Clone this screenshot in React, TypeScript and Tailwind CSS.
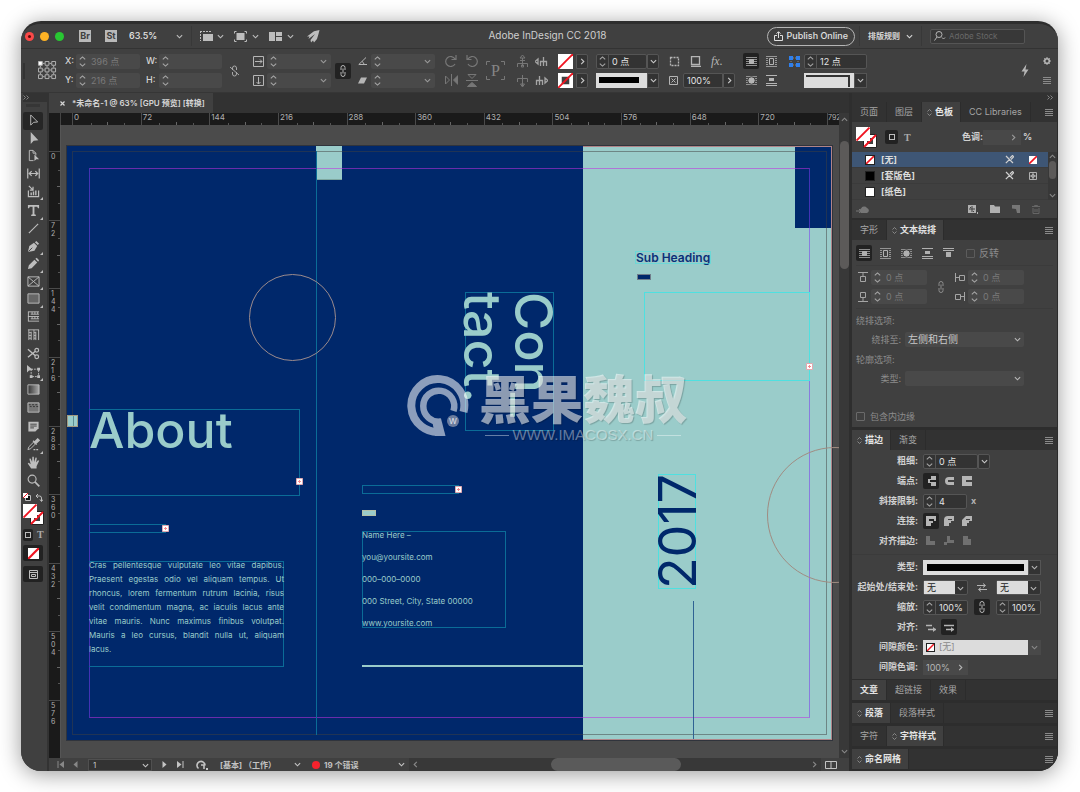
import { useState, type ReactNode } from "react";

function Svg({ w = 14, h = 14, box, children, className = "" }: { w?: number; h?: number; box?: string; children: ReactNode; className?: string }) {
  return (
    <svg
      width={w}
      height={h}
      viewBox={box ?? `0 0 ${w} ${h}`}
      fill="none"
      stroke="currentColor"
      aria-hidden="true"
      className={`block shrink-0 ${className}`}
    >
      {children}
    </svg>
  );
}

function Chevron({ dir = "down", className = "" }: { dir?: "down" | "up" | "left" | "right"; className?: string }) {
  const d = {
    down: "M1 2.5 4 5.5 7 2.5",
    up: "M1 5.5 4 2.5 7 5.5",
    left: "M5.5 1 2.5 4 5.5 7",
    right: "M2.5 1 5.5 4 2.5 7",
  }[dir];
  return (
    <Svg w={7} h={7} box="0 0 8 8" className={className}>
      <path d={d} strokeWidth="1.3" />
    </Svg>
  );
}

function Spin() {
  return (
    <Svg w={7} h={11} className="text-[#a8a8a8]">
      <path d="M.8 3.3 3.5.9l2.7 2.4M.8 7.7l2.7 2.4 2.7-2.4" strokeWidth="1.1" />
    </Svg>
  );
}

function Menu() {
  return (
    <button aria-label="面板菜单" className="text-[#8a8a8a]">
      <Svg w={8} h={7}>
        <path d="M0 .5h8M0 2.5h8M0 4.5h8M0 6.5h8" />
      </Svg>
    </button>
  );
}

// white square crossed by the red "none" stroke
function NoneSwatch({ size = 14, ring = false }: { size?: number; ring?: boolean }) {
  return (
    <Svg w={size} h={size} box="0 0 12 12">
      <path d="M0 0h12v12H0z" fill="#fff" stroke="none" />
      {ring && <path d="M3 3h6v6H3z" fill="#404040" stroke="none" />}
      <path d="M0 12 12 0" stroke="#f01420" strokeWidth={size < 12 ? 2.4 : 1.5} />
    </Svg>
  );
}

function FillStroke() {
  return (
    <Svg w={21} h={21}>
      <path d="M7.5 7.5h13v13h-13z" fill="#fff" stroke="#222" />
      <path d="M11 11h6v6h-6z" fill="#404040" stroke="none" />
      <path d="M8 20 20 8" stroke="#f01420" strokeWidth="2" />
      <path d="M0 0h14v14H0z" fill="#fff" stroke="none" />
      <path d="M.5 13.5 13.5.5" stroke="#f01420" strokeWidth="1.8" />
    </Svg>
  );
}

/* ---------- form parts ---------- */

function StepField({ label, value = "", width, dim = false }: { label: string; value?: string; width: string; dim?: boolean }) {
  return (
    <span
      className={`flex h-[15px] items-center rounded-xs ${dim ? "bg-[#494949]" : "border border-[#555] bg-[#333]"} ${width}`}
    >
      <span className={`flex h-full w-3 shrink-0 items-center justify-center ${dim ? "" : "border-r border-[#555]"}`}>
        <Spin />
      </span>
      <input
        aria-label={label}
        defaultValue={value}
        className={`h-full w-full min-w-0 bg-transparent pl-[3px] outline-none ${dim ? "text-[#7a7a7a]" : "text-[#e4e4e4]"}`}
      />
    </span>
  );
}

function Select({ label, options, width, tone = "dim" }: { label: string; options: string[]; width: string; tone?: "dim" | "light" }) {
  return (
    <span className={`relative flex h-[15px] rounded-xs ${tone === "light" ? "border border-[#555] bg-[#333]" : "bg-[#494949]"} ${width}`}>
      <select
        aria-label={label}
        className={`h-full appearance-none outline-none ${
          tone === "light" ? "mr-3 w-full bg-[#dcdcdc] pl-[3px] text-[#222]" : "w-full bg-transparent pl-[3px] text-[#c8c8c8]"
        }`}
      >
        {options.map((o) => (
          <option key={o}>{o}</option>
        ))}
      </select>
      <Chevron className="pointer-events-none absolute top-1 right-[3px] text-[#b8b8b8]" />
    </span>
  );
}

function StepSelect({ label }: { label: string }) {
  return (
    <span className="flex h-[15px] w-16 items-center justify-between rounded-xs bg-[#494949] pr-1">
      <span className="flex w-3 justify-center">
        <Spin />
      </span>
      <input aria-label={label} className="h-full min-w-0 flex-1 bg-transparent outline-none" />
      <Chevron className="text-[#9a9a9a]" />
    </span>
  );
}

function Drop({ label, dir = "down" }: { label: string; dir?: "down" | "right" }) {
  return (
    <button aria-label={label} className="flex h-[15px] w-3 items-center justify-center rounded-r-xs border border-[#555] bg-[#333] text-[#c8c8c8]">
      <Chevron dir={dir} />
    </button>
  );
}

function IconButton({ label, active = false, size = "size-4", className = "", children }: { label: string; active?: boolean; size?: string; className?: string; children: ReactNode }) {
  return (
    <button
      aria-label={label}
      className={`flex shrink-0 items-center justify-center rounded-xs ${size} ${active ? "bg-[#222]" : ""} ${className}`}
    >
      {children}
    </button>
  );
}

const Sep = () => <span className="h-9 w-px shrink-0 bg-[#383838]" />;

/* ---------- icons ---------- */

const ChainIcon = () => (
  <Svg w={6} h={12}>
    <path d="M1 5V2.5a2 2 0 0 1 4 0V5M1 7v2.5a2 2 0 0 0 4 0V7M3 3.5v5" />
  </Svg>
);

const WRAP_LINES = "M0 1.5h11M0 3.5h11M0 5.5h11M0 7.5h11M0 9.5h11";

const WrapNone = () => (
  <Svg w={11} h={11}>
    <path d={WRAP_LINES} opacity=".75" />
    <path d="M3.5 3.5h4v4h-4z" fill="currentColor" />
  </Svg>
);
const WrapBox = () => (
  <Svg w={11} h={11}>
    <path d="M0 .5h11M0 10.5h11M0 2.5h2M0 4.5h2M0 6.5h2M0 8.5h2M9 2.5h2M9 4.5h2M9 6.5h2M9 8.5h2" opacity=".75" />
    <path d="M3.5 2.5h4v6h-4z" />
  </Svg>
);
const WrapShape = () => (
  <Svg w={11} h={11}>
    <path d={WRAP_LINES} opacity=".7" />
    <circle cx="5.5" cy="5.5" r="3.7" fill="currentColor" stroke="#404040" />
  </Svg>
);
const WrapJump = () => (
  <Svg w={11} h={11}>
    <path d="M0 .5h11M0 10.5h11M0 8.5h11" />
    <path d="M3 3h5v3H3z" fill="currentColor" stroke="none" />
  </Svg>
);
const WrapNext = () => (
  <Svg w={11} h={11}>
    <path d="M0 .5h11M0 2.5h11" />
    <path d="M3 4h5v5H3z" fill="currentColor" stroke="none" />
  </Svg>
);

const toolGroups: { name: string; more?: boolean; icon: ReactNode }[][] = [
  [
    { name: "选择", icon: <path d="M4 1v11l3-3 4.5-.4z" /> },
    { name: "直接选择", icon: <path d="M4 0v13l3.200-3.500 5-.5z" fill="currentColor" stroke="none" /> },
    {
      name: "页面",
      icon: (
        <>
          <path d="M7 12.5H2.500v-11h4l3 3V7M6.500 1.500v3h3" />
          <path d="M8 6v7l2-2h3z" fill="currentColor" stroke="none" />
        </>
      ),
    },
    { name: "间隙", icon: <path d="M.8 1.500v11M13.200 1.500v11M2.500 7h9M5 4.500 2.500 7 5 9.500M9 4.500 11.500 7 9 9.500" strokeWidth="1.300" /> },
    {
      name: "内容收集器",
      more: true,
      icon: (
        <>
          <path d="M1.500 6v6.500h11V6M2 1l4 4M6.500 2v3.500H3" strokeWidth="1.300" />
          <path d="M4.500 8v3M7 7v4M9.500 6v5" strokeWidth="1.500" />
        </>
      ),
    },
  ],
  [
    { name: "文字", more: true, icon: <path d="M1 1h12v3.500h-1.200L11 3H8v8l1.500.5V13h-5v-1.500L6 11V3H3l-.8 1.500H1z" fill="currentColor" stroke="none" /> },
    { name: "直线", icon: <path d="M2 12 12 2" strokeWidth="1.200" /> },
    {
      name: "钢笔",
      more: true,
      icon: (
        <>
          <path d="M1 13 2.500 6.500 7.500 3l3.500 3.500-3 5z" fill="currentColor" stroke="none" />
          <path d="m8.500 2.500 1.500-1.500L13 4l-1.500 1.500z" fill="currentColor" stroke="none" />
          <path d="m1.500 12.500 4.200-4.200" stroke="#404040" />
        </>
      ),
    },
    {
      name: "铅笔",
      more: true,
      icon: <path d="m1 13 1-4 6-6 3 3-6 6zM9 2l1.500-1.200L13 3.500 12 5z" fill="currentColor" stroke="none" />,
    },
    { name: "矩形框架", more: true, icon: <path d="M1 2h12v10H1zM1 2l12 10M13 2 1 12" /> },
    { name: "矩形", more: true, icon: <path d="M1 2h12v10H1z" fill="#666" /> },
    { name: "水平网格", icon: <path d="M1 2h12M1 7h12M1 12h12M1.500 2v10M4 4.500h9M4 9.500h9M5.500 2v2.500M8.500 2v2.500M11.500 2v2.500M5.500 7v2.500M8.500 7v2.500M11.500 7v2.500" /> },
    { name: "垂直网格", icon: <path d="M1 2h12M2 2v11M4.500 4v9M7.500 2v11M9.500 4v9M12.500 2v11M2 5h2.500M2 8h2.500M2 11h2.500M7.500 5h2M7.500 8h2M7.500 11h2" /> },
  ],
  [
    {
      name: "剪刀",
      icon: (
        <>
          <circle cx="10.5" cy="3.5" r="2" strokeWidth="1.300" />
          <circle cx="10.5" cy="10.5" r="2" strokeWidth="1.300" />
          <path d="M1 2.500 9 9.500M1 11 9 4.500" strokeWidth="1.500" />
        </>
      ),
    },
    {
      name: "自由变换",
      more: true,
      icon: (
        <>
          <path d="M0 0v8l2.200-2L6.500 5.500z" fill="currentColor" stroke="none" />
          <path d="M4.500 4.500h8v8h-8z" strokeDasharray="2 1" />
          <path d="M11 3h3v3h-3zM11 11h3v3h-3zM3 11h3v3H3z" fill="currentColor" stroke="none" />
        </>
      ),
    },
    {
      name: "渐变色板",
      icon: (
        <>
          <defs>
            <linearGradient id="swatchRamp">
              <stop stopColor="#333" />
              <stop offset="1" stopColor="#aaa" />
            </linearGradient>
          </defs>
          <path d="M1 2h12v10H1z" fill="url(#swatchRamp)" />
        </>
      ),
    },
    {
      name: "渐变羽化",
      icon: (
        <>
          <path d="M1 2h12v10H1z" fill="#777" />
          <path d="M2 4h10M3 6h10" strokeDasharray="2 1.500" stroke="#333" />
        </>
      ),
    },
  ],
  [
    {
      name: "附注",
      icon: (
        <>
          <path d="M1.500 2h11v7l-3.500 3.500H1.500z" fill="currentColor" stroke="none" />
          <path d="M3.500 4.500h7M3.500 6.500h7M3.500 8.500h4" stroke="#404040" />
        </>
      ),
    },
    {
      name: "颜色主题",
      more: true,
      icon: (
        <>
          <path d="M1 12.500 2 9.500l5-5 2 2-5 5z" />
          <path d="m6.500 3 4 4M8.500 4l3-3 1.500 1.500-3 3z" strokeWidth="1.500" fill="currentColor" />
          <path d="M7 12.500h6" strokeWidth="1.500" strokeDasharray="2 1" />
        </>
      ),
    },
    {
      name: "抓手",
      icon: <path d="M4.500 13.500.8 8l1-.8L4 9 2.500 3l1.400-.4L5.500 6.500 5.800.8h1.500l.3 5.700L9.200 1.500l1.400.4L9.800 7l2-2.500 1.300.7L10.300 11v2.500z" fill="currentColor" stroke="none" />,
    },
    {
      name: "缩放显示",
      icon: (
        <>
          <circle cx="5.5" cy="5.5" r="4.300" strokeWidth="1.200" />
          <path d="m8.500 8.500 4.800 4.800" strokeWidth="1.800" />
        </>
      ),
    },
  ],
];

const groupHeights = ["h-[88px]", "h-[141px]", "h-[71px]", "h-[71px]"];

function Toolbar() {
  const [tool, setTool] = useState("选择");
  return (
    <nav className="flex w-[26px] shrink-0 flex-col items-start bg-[#404040] pl-0.5 text-[#bdbdbd]">
      <div className="flex h-[9px] w-full items-center bg-[#333] text-[#999]">
        <Svg w={6} h={5}>
          <path d="M.5.5l2 2-2 2M3.5.5l2 2-2 2" strokeWidth=".8" />
        </Svg>
      </div>
      <div className="my-[2px] ml-[3px] h-[3px] w-3.5 bg-[#363636]" />
      <div className="flex flex-col gap-0.5 pt-[3px]">
        {toolGroups.map((group, g) => (
          <div key={g} className={`grid auto-rows-fr ${groupHeights[g]}`}>
            {group.map((t) => (
              <button
                key={t.name}
                aria-label={t.name}
                onClick={() => setTool(t.name)}
                className={`relative flex w-5 items-center justify-center rounded-xs ${tool === t.name ? "bg-[#262626]" : ""}`}
              >
                <Svg w={13} h={13} box="0 0 14 14">
                  {t.icon}
                </Svg>
                {t.more && (
                  <Svg w={3} h={3} className="absolute right-0 bottom-0">
                    <path d="M3 0v3H0z" fill="currentColor" stroke="none" />
                  </Svg>
                )}
              </button>
            ))}
          </div>
        ))}
      </div>
      <div className="mt-1 flex w-5 justify-between">
        <Svg w={8} h={9}>
          <path d="M2.5 2.5h5v5h-5z" fill="#111" />
          <path d="M0 0h5v5H0z" fill="#fff" stroke="none" />
          <path d="M0 5 5 0" stroke="#f01420" />
        </Svg>
        <Svg w={8} h={9}>
          <path d="M1 3h3.500q2 0 2 2v3M3 1 1 3l2 2M5 6.500l1.500 2L8 6.500" />
        </Svg>
      </div>
      <div className="mt-0.5">
        <FillStroke />
      </div>
      <div className="mt-1 flex h-3 items-center gap-1">
        <IconButton label="格式针对容器" active size="h-3 w-2.5">
          <span className="size-[6px] border border-[#bdbdbd]" />
        </IconButton>
        <button aria-label="格式针对文本" className="font-['Liberation_Serif',serif] text-[10px] leading-3 font-bold text-[#aaa]">
          T
        </button>
      </div>
      <IconButton label="应用无" active size="h-4 w-5" className="mt-1">
        <NoneSwatch size={11} />
      </IconButton>
      <IconButton label="屏幕模式" active size="h-4 w-5" className="mt-[5px]">
        <Svg w={9} h={9}>
          <path d="M.5.5h8v8h-8zM.5 2.5h8M2.5 4.5h4v2h-4z" />
        </Svg>
      </IconButton>
    </nav>
  );
}

/* ---------- top bars ---------- */

function TitleBar() {
  return (
    <header className="grid h-[25px] grid-cols-[1fr_auto_1fr] items-center border-b border-[#333] bg-[#404040] pl-1">
      <div className="flex items-center text-[#bdbdbd]">
        <div className="flex gap-[6px]">
          <span className="flex size-[9px] items-center justify-center rounded-full bg-[#fb4948]">
            <span className="size-[3px] rounded-full bg-[#5c0a0a]" />
          </span>
          <span className="size-[9px] rounded-full bg-[#fdb225]" />
          <span className="size-[9px] rounded-full bg-[#28c732]" />
        </div>
        <button className="ml-[15px] size-3 bg-[#b9b9b9] text-[9px] leading-3 font-bold text-[#404040]">Br</button>
        <button className="ml-3.5 size-3 bg-[#b9b9b9] text-[9px] leading-3 font-bold text-[#404040]">St</button>
        <label className="relative ml-3 flex w-[54px] items-center">
          <select aria-label="缩放级别" className="w-full appearance-none bg-transparent text-[9px] font-medium text-[#e4e4e4] outline-none">
            <option>63.5%</option>
          </select>
          <Chevron className="pointer-events-none absolute right-0" />
        </label>
        <span className="ml-2 h-5 w-px bg-[#383838]" />
        <button aria-label="视图选项" className="ml-[7px] flex items-center gap-1">
          <Svg w={14} h={12}>
            <path d="M1 1.500h12M1.500 1v10" strokeDasharray="2 1" />
            <path d="M4 4h10v7H4z" fill="currentColor" stroke="none" />
          </Svg>
          <Chevron />
        </button>
        <button aria-label="屏幕模式选项" className="ml-2.5 flex items-center gap-[5px]">
          <Svg w={13} h={11}>
            <path d="M.5 2.500v-2h2M10.500.5h2v2M12.500 8.500v2h-2M2.500 10.500h-2v-2" />
            <path d="M2.500 2h8v7h-8z" fill="currentColor" stroke="none" />
          </Svg>
          <Chevron />
        </button>
        <button aria-label="排列文档" className="ml-2.5 flex items-center gap-[5px]">
          <Svg w={13} h={9}>
            <path d="M0 0h6v9H0zM7 0h6v4H7zM7 5h6v4H7z" fill="currentColor" stroke="none" />
          </Svg>
          <Chevron />
        </button>
        <button aria-label="GPU 性能" className="ml-3">
          <Svg w={14} h={13}>
            <path d="M13.500 0 8 1.200 1 6.500l2.500 0-1 2.500 6.500-5-4.500 6 .5 2.500 2-2 1 2 3-3.500 1.500-5z" fill="currentColor" stroke="none" />
          </Svg>
        </button>
      </div>
      <h1 className="pb-0.5 pl-3 text-[10px] text-[#cfcfcf]">Adobe InDesign CC 2018</h1>
      <div className="flex items-center justify-end pr-[33px]">
        <button className="flex h-[19px] items-center gap-1 rounded-full border-[1.500px] border-[#b5b5b5] px-1.5 text-[9px] font-medium text-[#e0e0e0]">
          <Svg w={9} h={10}>
            <path d="M3 4.500H.5v5h8v-5H6M4.500 7V1M2.500 2.700l2-2 2 2" />
          </Svg>
          Publish Online
        </button>
        <span className="ml-1 h-5 w-px bg-[#383838]" />
        <button className="ml-2 flex items-center gap-1.5 text-[8px] font-bold text-[#d6d6d6]">
          排版规则
          <Chevron />
        </button>
        <span className="ml-2 h-5 w-px bg-[#383838]" />
        <label className="ml-2 flex h-[15px] w-[95px] items-center rounded-xs border border-[#555] bg-[#383838] pl-[3px]">
          <Svg w={12} h={10} className="text-[#b5b5b5]">
            <circle cx="5" cy="3.5" r="3" />
            <path d="M3 6 .5 9.500M8 6.500l1.500 1.500L11 6.500" />
          </Svg>
          <input
            aria-label="搜索 Adobe Stock"
            placeholder="Adobe Stock"
            className="w-full min-w-0 bg-transparent pl-[3px] text-[8px] outline-none placeholder:text-[#686868]"
          />
        </label>
      </div>
    </header>
  );
}

const twoRows = "grid shrink-0 grid-rows-[15px_15px] gap-y-1 items-center";

function ControlBar() {
  return (
    <section className="flex h-11 items-center border-b border-[#363636] bg-[#404040] text-[9px] text-[#b5b5b5]">
      <span className="ml-0.5 h-4 w-[2px] bg-[#333]" />
      <Svg w={19} h={19} box="0 0 20 20" className="ml-[13px]">
        {[0, 7, 14].map((y) => [0, 7, 14].map((x) => <path key={`${x}-${y}`} d={`M${x + 0.5} ${y + 0.5}h4v4h-4z`} fill={x + y === 0 ? "#fff" : "none"} />))}
        <path d="M5 2.500h2M12 2.500h2M5 9.500h2M12 9.500h2M5 16.500h2M12 16.500h2M2.500 5v2M2.500 12v2M9.500 5v2M9.500 12v2M16.500 5v2M16.500 12v2" />
      </Svg>
      <div className={`ml-2 ${twoRows} text-[#d6d6d6]`}>
        <label className="flex items-center">
          <span className="w-[11px] text-[9px] font-medium">X:</span>
          <StepField label="X 位置" value="396 点" width="w-16" dim />
        </label>
        <label className="flex items-center">
          <span className="w-[11px] text-[9px] font-medium">Y:</span>
          <StepField label="Y 位置" value="216 点" width="w-16" dim />
        </label>
      </div>
      <div className={`ml-1.5 ${twoRows} text-[#d6d6d6]`}>
        <label className="flex items-center">
          <span className="w-[13px] text-[9px] font-medium">W:</span>
          <StepField label="宽度" width="w-[63px]" dim />
        </label>
        <label className="flex items-center">
          <span className="w-[13px] text-[9px] font-medium">H:</span>
          <StepField label="高度" width="w-[63px]" dim />
        </label>
      </div>
      <button aria-label="约束宽度和高度" className="ml-2 text-[#a8a8a8]">
        <Svg w={9} h={12}>
          <path d="M2.500 5V3a2 2 0 0 1 4 0v2M2.500 7v2a2 2 0 0 0 4 0V7M0 2l9 8" />
        </Svg>
      </button>
      <span className="ml-2.5">
        <Sep />
      </span>
      <div className={`ml-1 ${twoRows}`}>
        <span className="flex items-center gap-[3px]">
          <Svg w={11} h={11}>
            <path d="M.5.5h10v10H.5zM2 5.500h7M7 3.500l2 2-2 2" />
          </Svg>
          <StepSelect label="X 缩放" />
        </span>
        <span className="flex items-center gap-[3px]">
          <Svg w={11} h={11}>
            <path d="M.5.5h10v10H.5zM5.500 2v7M3.500 7l2 2 2-2" />
          </Svg>
          <StepSelect label="Y 缩放" />
        </span>
      </div>
      <IconButton label="约束缩放比例" active className="ml-1">
        <ChainIcon />
      </IconButton>
      <div className={`ml-[7px] ${twoRows}`}>
        <span className="flex items-center gap-1">
          <Svg w={9} h={9}>
            <path d="M8 .5.8 7.500H9M4 4.500q2 1 2 3" />
          </Svg>
          <StepSelect label="旋转角度" />
        </span>
        <span className="flex items-center gap-1">
          <Svg w={9} h={9}>
            <path d="M3 1.500h6l-3 6H0z" fill="currentColor" stroke="none" />
          </Svg>
          <StepSelect label="切变角度" />
        </span>
      </div>
      <div className={`ml-2.5 ${twoRows} grid-cols-2 gap-x-2 text-[#777]`}>
        <button aria-label="顺时针旋转">
          <Svg w={12} h={13}>
            <path d="M10 9a5 5 0 1 1 0-5M11 0v4.500H6.500" strokeWidth="1.200" />
          </Svg>
        </button>
        <button aria-label="逆时针旋转">
          <Svg w={12} h={13}>
            <path d="M2 9a5 5 0 1 0 0-5M1 0v4.500h4.500" strokeWidth="1.200" />
          </Svg>
        </button>
        <button aria-label="水平翻转">
          <Svg w={13} h={12}>
            <path d="M.5 2v8l4-4zM6.500 0v12" />
            <path d="M13 1.500v9L8.500 6z" fill="currentColor" />
          </Svg>
        </button>
        <button aria-label="垂直翻转">
          <Svg w={12} h={13}>
            <path d="M2 .5h8l-4 4zM0 6.500h12" />
            <path d="M1.500 12.500h9L6 8.500z" fill="currentColor" />
          </Svg>
        </button>
      </div>
      <span className="relative ml-[7px] flex size-[19px] items-center justify-center font-['Liberation_Serif',serif] text-[16px] leading-4 text-[#858585]">
        <Svg w={19} h={19} className="absolute">
          <path d="M.5 4V.5H4M15 .5h3.500V4M18.500 15v3.500H15M4 18.500H.5V15" stroke="#777" />
        </Svg>
        P
      </span>
      <span className="ml-1">
        <Sep />
      </span>
      <div className={`ml-[7px] ${twoRows} grid-cols-2 gap-x-1.5`}>
        {["选择容器", "选择上一对象", "选择内容", "选择下一对象"].map((name, i) => (
          <button key={name} aria-label={name} className={i % 2 ? "text-[#a5a5a5]" : "text-[#777]"}>
            <Svg w={13} h={13}>
              {i === 0 && <path d="M6.500 3v8M1.500 12V8.500h10V12M4 5.500h5M6.500 0 9 3H4zM5.500 10h2v2h-2z" />}
              {i === 1 && <path d="M8.500 2v9M5.500 11V6.500h6V11M0 6.500 3 4v5z" strokeWidth="1.300" />}
              {i === 2 && <path d="M6.500 1v11M1.500 8V4.500h10V8M6.500 13 4.500 10h4z" />}
              {i === 3 && <path d="M4.500 2v9M1.500 11V6.500h6V11M13 6.500 10 4v5z" strokeWidth="1.300" />}
            </Svg>
          </button>
        ))}
      </div>
      <div className={`ml-2.5 ${twoRows}`}>
        <span className="flex gap-[3px]">
          <button aria-label="填色">
            <NoneSwatch size={15} />
          </button>
          <Drop label="填色选项" dir="right" />
        </span>
        <span className="flex gap-[3px]">
          <button aria-label="描边">
            <NoneSwatch size={15} ring />
          </button>
          <Drop label="描边选项" dir="right" />
        </span>
      </div>
      <div className={`ml-2 ${twoRows}`}>
        <span className="flex">
          <StepField label="描边粗细" value="0 点" width="w-[51px]" />
          <Drop label="粗细预设" />
        </span>
        <button aria-label="描边类型" className="flex">
          <span className="flex h-[15px] w-[51px] items-center bg-[#dcdcdc] px-[3px]">
            <span className="h-[6px] w-10 bg-black" />
          </span>
          <span className="flex h-[15px] w-3 items-center justify-center border border-[#555] bg-[#333] text-[#c8c8c8]">
            <Chevron />
          </span>
        </button>
      </div>
      <div className={`ml-2.5 ${twoRows}`}>
        <span className="flex items-center gap-[9px]">
          <Svg w={12} h={11}>
            <path d="M1.500 1.500h8v8h-8z" strokeDasharray="2 1" strokeWidth="1.300" />
          </Svg>
          <Svg w={12} h={11}>
            <path d="M1.500.5h8v8h-8zM1 10.500h10" strokeWidth="1.300" />
          </Svg>
          <span className="font-['Liberation_Serif',serif] text-[12px] leading-3 italic">fx.</span>
        </span>
        <label className="flex items-center gap-[5px]">
          <Svg w={9} h={9}>
            <path d="M.5.5h8v8h-8zM2.500 2.500l4 4M6.500 2.500l-4 4" />
          </Svg>
          <span className="flex">
            <input aria-label="不透明度" defaultValue="100%" className="h-[15px] w-10 rounded-l-xs border border-[#555] bg-[#333] pl-[3px] text-[#e4e4e4] outline-none" />
            <Drop label="不透明度滑块" dir="right" />
          </span>
        </label>
      </div>
      <div className={`ml-2 ${twoRows} grid-cols-2 gap-x-1`}>
        <IconButton label="无文本绕排" active>
          <WrapNone />
        </IconButton>
        <IconButton label="沿定界框绕排">
          <WrapBox />
        </IconButton>
        <IconButton label="沿对象形状绕排">
          <WrapShape />
        </IconButton>
        <IconButton label="上下型绕排">
          <WrapJump />
        </IconButton>
      </div>
      <div className={`ml-2.5 ${twoRows}`}>
        <span className="flex items-center gap-1">
          <Svg w={11} h={11} className="text-[#2f80ed]">
            <path d="M2 2h7v7H2z" stroke="#888" strokeDasharray="1 1" />
            <path d="M0 0h4v4H0zM7 0h4v4H7zM0 7h4v4H0zM7 7h4v4H7z" fill="currentColor" stroke="none" />
          </Svg>
          <StepField label="转角大小" value="12 点" width="w-[63px]" />
        </span>
        <button aria-label="转角形状" className="ml-[15px] flex">
          <span className="flex h-[15px] w-[50px] bg-[#dcdcdc] pt-0.5 pr-1 pl-0.5">
            <span className="h-3 w-full border-t-2 border-r-2 border-[#333]" />
          </span>
          <span className="flex h-[15px] w-[13px] items-center justify-center border border-[#555] bg-[#333] text-[#c8c8c8]">
            <Chevron />
          </span>
        </button>
      </div>
      <button aria-label="快速应用" className="mr-3.5 ml-auto">
        <Svg w={8} h={13}>
          <path d="M5.500 0 .5 7.500h3L2.500 13l5-7.500h-3z" fill="currentColor" stroke="none" />
        </Svg>
      </button>
      <div className={`mr-[7px] ${twoRows} justify-items-center`}>
        <button aria-label="自定义控制面板">
          <Svg w={8} h={8}>
            <circle cx="4" cy="4" r="2.300" strokeWidth="1.600" />
            <path d="M4 0v1M4 7v1M0 4h1M7 4h1M1.200 1.200l.7.7M6.100 6.100l.7.7M6.800 1.200l-.7.7M1.900 6.100l-.7.7" />
          </Svg>
        </button>
        <Menu />
      </div>
    </section>
  );
}

/* ---------- document ---------- */

const marks = [0, 72, 144, 216, 288, 360, 432, 504, 576, 648, 720];

function RulerX() {
  return (
    <div className="flex h-3 overflow-hidden bg-[#1a1a1a] text-[8px] leading-[9px] text-[#b0b0b0]">
      <span className="w-3 shrink-0 border-r border-[#444]" />
      <span className="w-[11px] shrink-0" />
      <div className="grid w-[755px] shrink-0 grid-cols-11">
        {marks.map((m) => (
          <span key={m} className="flex flex-col justify-between border-l border-[#4a4a4a] pl-px">
            {m}
            <span className="grid h-[3px] grid-cols-4 items-end">
              <i className="h-0" />
              <i className="h-0.5 border-l border-[#555]" />
              <i className="h-[3px] border-l border-[#666]" />
              <i className="h-0.5 border-l border-[#555]" />
            </span>
          </span>
        ))}
      </div>
      <span className="border-l border-[#4a4a4a] text-[7px]">792</span>
    </div>
  );
}

function RulerCellY({ value, last = false }: { value: number; last?: boolean }) {
  return (
    <span className={`flex justify-between border-t border-[#4a4a4a] pt-px pl-[2px] ${last ? "flex-1" : ""}`}>
      <span className="flex flex-col">
        {String(value).split("").map((d, i) => (
          <span key={i}>{d}</span>
        ))}
      </span>
      {!last && (
        <span className="grid w-[3px] grid-rows-4 justify-items-end">
          <i />
          <i className="w-0.5 border-t border-[#555]" />
          <i className="w-[3px] border-t border-[#666]" />
          <i className="w-0.5 border-t border-[#555]" />
        </span>
      )}
    </span>
  );
}

function RulerY() {
  return (
    <div className="flex w-3 shrink-0 flex-col overflow-hidden border-r border-[#555] bg-[#1a1a1a] pt-[26px] text-[7px] leading-[8px] text-[#b0b0b0]">
      <div className="grid h-[549px] auto-rows-fr">
        {marks.slice(0, 8).map((m) => (
          <RulerCellY key={m} value={m} />
        ))}
      </div>
      <RulerCellY value={576} last />
    </div>
  );
}

// overset-text marker on a frame's out port
function Overset({ className }: { className: string }) {
  return (
    <svg width="7" height="7" viewBox="0 0 7 7" className={`absolute ${className}`} aria-hidden="true">
      <path d="M.5.5h6v6h-6z" fill="#fff" stroke="#e0a8b0" />
      <path d="M3.5 2v3M2 3.5h3" stroke="#f58a8e" />
    </svg>
  );
}

const bodyLines = [
  "Cras pellentesque vulputate leo vitae dapibus.",
  "Praesent egestas odio vel aliquam tempus. Ut",
  "rhoncus, lorem fermentum rutrum lacinia, risus",
  "velit condimentum magna, ac iaculis lacus ante",
  "vitae mauris. Nunc maximus finibus volutpat.",
  "Mauris a leo cursus, blandit nulla ut, aliquam",
];

const contactLines = ["Name Here –", "you@yoursite.com", "000–000–0000", "000 Street, City, State 00000", "www.yoursite.com"];

function Watermark() {
  return (
    <div className="absolute top-[225px] left-[340px] flex w-[290px]">
      <svg width="62" height="67" viewBox="0 -3 62 67" fill="none" stroke="#fff" className="shrink-0 opacity-55" aria-hidden="true">
        <path d="M56.500 38A26.500 26.500 0 1 0 36 57.500" strokeWidth="8" />
        <path d="M46.500 37A15.500 15.500 0 1 0 34 47.500" strokeWidth="6.500" />
        <path d="M25 46 34 44.500 38.500 62 28 62z" fill="#fff" stroke="none" />
      </svg>
      <span className="absolute top-[44px] left-10 flex size-3 items-center justify-center rounded-full bg-[#6b7c9e] text-[8px] leading-3 text-white/80">W</span>
      <div className="flex flex-col items-center pl-2.5 text-white/55 [text-shadow:1px_1px_1px_rgba(0,0,0,0.2)]">
        <p className="font-['Noto_Sans_CJK_SC',sans-serif] text-[52px] leading-[52px] font-black whitespace-nowrap">黑果魏叔</p>
        <p className="flex items-center gap-1 pt-1 font-['Liberation_Sans',sans-serif] text-[15px] leading-4 whitespace-nowrap text-white/40">
          <span className="h-px w-6 bg-white/40" />
          WWW.IMACOSX.CN
          <span className="h-px w-6 bg-white/40" />
        </p>
      </div>
    </div>
  );
}

// the spread is a free canvas: every frame keeps its own coordinates
function Spread() {
  const frame = "absolute border border-[#0b6c97]";
  const bright = "absolute border border-[#4fe0e0]";
  return (
    <div className="relative h-[594px] w-[765px] bg-[#00286b] text-[#9accca] outline outline-[#30343c]">
      <div className="absolute inset-y-0 right-0 w-[249px] border-y border-r border-[#b08488] bg-[#9accca]" />
      <div className="absolute top-0 left-[249px] h-[34px] w-[26px] border-b border-[#7fa8a0] bg-[#9accca]" />
      <div className="absolute top-px right-px h-[81px] w-9 bg-[#00286b]" />
      <div className="absolute inset-[5px] border border-[#404040]/50" />
      <div className="absolute inset-[22px] border border-x-[#7b3cf0]/55 border-y-[#c030e0]/55" />
      <div className="absolute top-[5px] bottom-[5px] left-[249px] w-px bg-[#0b6c97]" />
      <div className="absolute top-[128px] left-[182px] size-[87px] rounded-full border border-[#9b8a8c]" />
      <div className="absolute top-[269px] left-0 flex h-3 w-[11px] border border-[#a39a80] bg-[#9accca]">
        <span className="ml-[5px] w-px bg-[#5f8f93]" />
      </div>

      <div className={`${frame} top-[263px] left-[22px] h-[87px] w-[211px] border-l-0`}>
        <h2 className="text-[50px] leading-10 font-medium">About</h2>
      </div>
      <Overset className="top-[332px] left-[229px]" />

      <div className={`${frame} top-[378px] left-[22px] h-[9px] w-[77px] border-l-0`} />
      <Overset className="top-[379px] left-[95px]" />

      <div className={`${frame} top-[415px] left-[22px] h-[106px] w-[195px] border-l-0`} />
      <div className="absolute top-[412px] left-[22px] w-[195px] text-[8px] leading-[14px]">
        {bodyLines.map((l) => (
          <p key={l} className="[text-align-last:justify]">
            {l}
          </p>
        ))}
        <p>lacus.</p>
      </div>

      <div className={`${frame} top-[146px] left-[398px] h-[139px] w-[89px]`} />
      <h2 className="absolute top-[146px] left-[390px] text-[52px] leading-[51px] font-medium [writing-mode:vertical-rl]">
        Con_
        <br />
        tact.
      </h2>

      <div className={`${frame} top-[339px] left-[295px] h-[9px] w-[97px]`} />
      <Overset className="top-[340px] left-[388px]" />
      <div className="absolute top-[364px] left-[295px] h-1.5 w-3.5 border border-[#b3c0a8] bg-[#9accca]" />

      <div className={`${frame} top-[385px] left-[295px] h-[97px] w-36`} />
      <address className="absolute top-[378px] left-[295px] text-[8px] leading-[22px] whitespace-nowrap not-italic">
        {contactLines.map((l) => (
          <p key={l}>{l}</p>
        ))}
      </address>
      <div className="absolute top-[519px] left-[295px] h-0.5 w-[221px] bg-[#9accca]" />

      <h3 className="absolute top-[106px] left-[569px] text-[12px] leading-[11px] font-semibold text-[#0b2f78] outline outline-[#4fe0e0]/60">Sub Heading</h3>
      <div className="absolute top-[128px] left-[570px] h-1.5 w-3.5 border border-[#6f7d8a] bg-[#00286b]" />
      <div className={`${bright} top-[146px] left-[577px] h-[89px] w-[166px]`} />
      <Overset className="top-[217px] left-[739px]" />

      <div className={`${bright} top-[328px] left-[591px] h-[115px] w-[38px]`} />
      <p className="absolute top-[328px] left-[586px] rotate-180 text-[52px] leading-[50px] text-[#00286b] [writing-mode:vertical-rl]">2017</p>
      <div className="absolute top-[455px] left-[626px] h-[138px] w-px bg-[#2f6293]" />
      <div className="absolute top-[301px] left-[700px] size-[136px] rounded-full border border-[#a08c82]" />
      <Watermark />
    </div>
  );
}

function StatusBar() {
  return (
    <footer className="flex h-[13px] shrink-0 items-center bg-[#404040] text-[8px] leading-3 text-[#c4c4c4]">
      <button aria-label="首页" className="ml-2 text-[#888]">
        <Svg w={7} h={7}>
          <path d="M1 0v7" />
          <path d="M7 0v7L2.500 3.500z" fill="currentColor" stroke="none" />
        </Svg>
      </button>
      <button aria-label="上一页" className="ml-[9px] text-[#888]">
        <Svg w={5} h={7}>
          <path d="M4.500 0v7L.5 3.500z" fill="currentColor" stroke="none" />
        </Svg>
      </button>
      <label className="relative ml-2.5 flex h-3 w-16 border border-[#505050] bg-[#333]">
        <select aria-label="页码" className="w-full appearance-none bg-transparent pl-1 leading-[10px] outline-none">
          <option>1</option>
        </select>
        <Chevron className="pointer-events-none absolute top-0.5 right-0.5" />
      </label>
      <button aria-label="下一页" className="ml-2.5">
        <Svg w={5} h={7}>
          <path d="M.5 0v7l4-3.500z" fill="currentColor" stroke="none" />
        </Svg>
      </button>
      <button aria-label="末页" className="ml-2.5">
        <Svg w={7} h={7}>
          <path d="M6 0v7" />
          <path d="M0 0v7l4.500-3.500z" fill="currentColor" stroke="none" />
        </Svg>
      </button>
      <button aria-label="在结构中打开" className="ml-3">
        <Svg w={12} h={10}>
          <path d="M2.500 8.500a4 4 0 1 1 6.500-3M5 5h3v4" strokeWidth="1.600" />
          <path d="M10 8h2v2h-2z" fill="currentColor" stroke="none" />
        </Svg>
      </button>
      <label className="relative ml-3 flex w-[81px] items-center">
        <select aria-label="印前检查配置" className="w-full appearance-none bg-transparent font-bold outline-none">
          <option>[基本] （工作）</option>
        </select>
        <Chevron className="pointer-events-none absolute right-0" />
      </label>
      <button className="ml-[11px] flex w-[93px] items-center font-bold">
        <span className="mr-1 size-2 rounded-full bg-[#f5222d]" />
        19 个错误
        <Chevron className="ml-auto" />
      </button>
      <div className="ml-1 flex h-full flex-1 items-center bg-[#383838] px-[3px] text-[#888]">
        <Chevron dir="left" />
        <span className="flex h-full flex-1 justify-center pl-0.5">
          <span className="h-full w-[130px] rounded-full bg-[#5a5a5a]" />
        </span>
        <Chevron dir="right" />
      </div>
      <button aria-label="拆分版面视图" className="mx-1">
        <Svg w={12} h={8}>
          <path d="M.5.5h11v7H.5zM6 0v8" />
        </Svg>
      </button>
      <span className="w-2" />
    </footer>
  );
}

function DocumentArea() {
  return (
    <main className="flex min-w-0 flex-1 flex-col">
      <div className="flex h-5 bg-[#323232]">
        <div className="flex items-center gap-1.5 bg-[#404040] pr-2 pl-2.5 text-[8px] font-semibold text-[#d6d6d6]">
          <button aria-label="关闭文档">
            <Svg w={7} h={7}>
              <path d="m1.500 1.500 4 4M5.500 1.500l-4 4" strokeWidth="1.200" />
            </Svg>
          </button>
          *未命名-1 @ 63% [GPU 预览] [转换]
        </div>
      </div>
      <div className="flex flex-1">
        <div className="flex min-w-0 flex-1 flex-col">
          <RulerX />
          <div className="flex flex-1">
            <RulerY />
            <div className="min-w-0 flex-1 overflow-hidden bg-[#4b4b4b] pt-[21px] pl-1.5">
              <Spread />
            </div>
          </div>
        </div>
        <div className="flex w-2.5 flex-col items-center bg-[#383838] py-[3px] text-[#888]">
          <Chevron dir="up" />
          <span className="mt-[18px] h-32 w-[9px] rounded-full bg-[#5c5a59]" />
          <Chevron className="mt-auto" />
        </div>
      </div>
      <StatusBar />
    </main>
  );
}

/* ---------- panels ---------- */

function Tabs({ tabs, active, menu = true, arrow = true }: { tabs: string[]; active: string; menu?: boolean; arrow?: boolean }) {
  const [current, setCurrent] = useState(active);
  return (
    <div role="tablist" className="flex h-5 shrink-0 items-stretch bg-[#323232] pr-1 text-[9px]">
      {tabs.map((t) => (
        <button
          key={t}
          role="tab"
          aria-selected={t === current}
          onClick={() => setCurrent(t)}
          className={`flex items-center border-r border-[#2c2c2c] ${
            t === current ? `bg-[#404040] font-bold text-[#e4e4e4] ${arrow ? "gap-[3px] pr-[7px] pl-[5px]" : "px-2"}` : "px-2 text-[#a5a5a5]"
          }`}
        >
          {t === current && arrow && (
            <Svg w={5} h={7} className="text-[#999]">
              <path d="M.5 2.500l2-2 2 2M.5 4.500l2 2 2-2" strokeWidth=".8" />
            </Svg>
          )}
          {t}
        </button>
      ))}
      {menu && (
        <span className="ml-auto flex items-center">
          <Menu />
        </span>
      )}
    </div>
  );
}

const swatches = [
  { name: "[无]", fill: "none", locked: true, last: "none" },
  { name: "[套版色]", fill: "black", locked: true, last: "reg" },
  { name: "[纸色]", fill: "paper", locked: false, last: "" },
];

function SwatchPanel() {
  const [selected, setSelected] = useState("[无]");
  return (
    <section>
      <Tabs tabs={["页面", "图层", "色板", "CC Libraries"]} active="色板" />
      <div className="flex h-24 flex-col bg-[#404040]">
        <div className="flex h-[30px] items-center pl-1 text-[9px] font-bold text-[#d0d0d0]">
          <FillStroke />
          <IconButton label="格式针对容器" active size="h-3.5 w-[13px]" className="ml-2">
            <span className="size-[6px] border border-[#bdbdbd]" />
          </IconButton>
          <button aria-label="格式针对文本" className="ml-1.5 font-['Liberation_Serif',serif] text-[10px] text-[#aaa]">
            T
          </button>
          <label htmlFor="tint" className="ml-auto">
            色调:
          </label>
          <span className="flex h-[15px] w-[38px] items-center bg-[#484848] pr-1">
            <input id="tint" className="h-full w-full min-w-0 bg-transparent outline-none" />
            <Chevron dir="right" className="text-[#999]" />
          </span>
          <span className="mr-6 ml-0.5 w-2.5">%</span>
        </div>
        <div className="flex">
          <ul className="flex-1 text-[9px] font-bold text-[#dcdcdc]">
            {swatches.map((s) => (
              <li key={s.name} className="border-b border-[#3b3b3b]">
                <button
                  onClick={() => setSelected(s.name)}
                  className={`flex h-[15px] w-full items-center pr-[11px] pl-[13px] ${selected === s.name ? "bg-[#3e5675]" : ""}`}
                >
                  <span className="flex size-[10px] items-center justify-center border border-[#222]">
                    {s.fill === "none" ? <NoneSwatch size={8} /> : <span className={`size-2 ${s.fill === "black" ? "bg-black" : "bg-white"}`} />}
                  </span>
                  <span className="ml-1.5">{s.name}</span>
                  {s.locked && (
                    <Svg w={9} h={9} className="ml-auto text-[#cfcfcf]">
                      <path d="m1 1 7 7M.8 8.200 5 4M5 3l2.500-2.500 1.200 1.200L6 4.500" strokeWidth="1.200" />
                    </Svg>
                  )}
                  {s.last === "none" && (
                    <span className="ml-[15px]">
                      <NoneSwatch size={8} />
                    </span>
                  )}
                  {s.last === "reg" && (
                    <Svg w={8} h={8} className="ml-[15px] text-[#b0b0b0]">
                      <path d="M.5.5h7v7h-7zM4 0v8M0 4h8" />
                      <circle cx="4" cy="4" r="1.5" />
                    </Svg>
                  )}
                </button>
              </li>
            ))}
          </ul>
          <div className="flex w-[9px] flex-col items-center justify-between bg-[#383838] py-px text-[#888]">
            <Chevron dir="up" />
            <span className="-mt-3 h-[18px] w-[7px] rounded-full bg-[#5c5a59]" />
            <Chevron />
          </div>
        </div>
        <div className="flex flex-1 items-center pr-[17px] pl-1 text-[#777]">
          <Svg w={14} h={9}>
            <path d="M5 8a2.500 2.500 0 0 1 0-4.500A3.500 3.500 0 0 1 11 3a2.600 2.600 0 0 1 0 5z" fill="currentColor" stroke="none" />
            <path d="M0 6h5M3 4l2 2-2 2" />
          </Svg>
          <div className="ml-auto flex items-center gap-3 text-[#b0b0b0]">
            <Svg w={10} h={9}>
              <path d="M0 0h8v8H0z" fill="currentColor" stroke="none" />
              <path d="M1 4h6M4 1v6M2 2l1 1M5 6l1 1" stroke="#404040" />
              <path d="M9 7h1v2H9z" fill="currentColor" stroke="none" />
            </Svg>
            <Svg w={10} h={8}>
              <path d="M0 0h4l1 1.500h5V8H0z" fill="currentColor" stroke="none" />
            </Svg>
            <Svg w={8} h={8} className="text-[#777]">
              <path d="M0 0h8v8H5L4 4 0 3.500z" fill="currentColor" stroke="none" />
            </Svg>
            <Svg w={8} h={9} className="text-[#666]">
              <path d="M0 1.500h8M2.500 1.500v-1h3v1M1 3v5.500h6V3M3 4v3M5 4v3" />
            </Svg>
          </div>
        </div>
      </div>
    </section>
  );
}

function OffsetField({ label, d }: { label: string; d: string }) {
  return (
    <label className="flex items-center gap-[3px] text-[#a5a5a5]">
      <Svg w={10} h={11}>
        <path d={d} />
      </Svg>
      <StepField label={label} value="0 点" width="w-14" dim />
    </label>
  );
}

function WrapPanel() {
  return (
    <section className="mt-0.5">
      <Tabs tabs={["字形", "文本绕排"]} active="文本绕排" />
      <div className="h-[187px] bg-[#404040] px-1 pt-[5px] text-[9px] text-[#8c8c8c]">
        <div className="flex items-center gap-[5px] text-[#b0b0b0]">
          <IconButton label="无文本绕排" active>
            <WrapNone />
          </IconButton>
          <IconButton label="沿定界框绕排">
            <WrapBox />
          </IconButton>
          <IconButton label="沿对象形状绕排">
            <WrapShape />
          </IconButton>
          <IconButton label="上下型绕排">
            <WrapJump />
          </IconButton>
          <IconButton label="下型绕排">
            <WrapNext />
          </IconButton>
          <label className="ml-[5px] flex items-center gap-1 text-[10px] text-[#8c8c8c]">
            <input type="checkbox" className="size-[9px] appearance-none rounded-[1px] border border-[#5c5c5c]" />
            反转
          </label>
        </div>
        <div className="mt-1 flex items-center border-y border-[#3b3b3b] py-1">
          <div className="grid gap-1 pl-0.5">
            <OffsetField label="上位移" d="M0 .5h10M5 1v3M2.500 4.500h5v5h-5z" />
            <OffsetField label="下位移" d="M0 10.500h10M5 7v3M2.500 1.500h5v5h-5z" />
          </div>
          <span className="mx-auto flex size-4 items-center justify-center text-[#8c8c8c]">
            <ChainIcon />
          </span>
          <div className="mr-[29px] grid gap-1">
            <OffsetField label="左位移" d="M.5 1v9M1 5.500h3M4.500 3.500h5v5h-5z" />
            <OffsetField label="右位移" d="M9.500 1v9M6 5.500h3M.5 3.500h5v5h-5z" />
          </div>
        </div>
        <p className="pt-[5px] leading-[14px]">绕排选项:</p>
        <label className="mt-1 flex items-center gap-1 text-[10px]">
          <span className="w-[45px] text-right text-[9px]">绕排至:</span>
          <Select label="绕排至" options={["左侧和右侧"]} width="w-[119px]" />
        </label>
        <p className="mt-1 pt-0.5 leading-[14px]">轮廓选项:</p>
        <label className="mt-1 flex items-center gap-1">
          <span className="w-[45px] text-right">类型:</span>
          <Select label="轮廓类型" options={[""]} width="w-[119px]" />
        </label>
        <label className="mt-6 flex items-center gap-[5px]">
          <input type="checkbox" className="size-[9px] appearance-none rounded-[1px] border border-[#6a6a6a]" />
          包含内边缘
        </label>
      </div>
    </section>
  );
}

function Row({ label, children }: { label: string; children: ReactNode }) {
  return (
    <div className="flex h-5 items-center">
      <span className="mr-[5px] w-[66px] text-right font-bold whitespace-nowrap text-[#d0d0d0]">{label}</span>
      {children}
    </div>
  );
}

function StrokePanel() {
  const cap = ["M5 0h5v4H4v2h6v4H5V7H2V3h3z", "M5 1h5v3H4v2h6v3H5a4 4 0 0 1 0-8z", "M0 0h10v4H4v2h6v4H0z"];
  const join = ["M0 0h10v5H7v2H5v3H0zM3 3v2h5V3z", "M4 0h6v5H7v2H5v3H0V4q0-4 4-4zM4 3v1h4V3z", "M4 0h6v5H7v2H5v3H0V4zM4 3v1h4V3z"];
  const align = ["M0 0h4v5h5v4H0z", "M3 0h3v4h4v3H3v2H0V6h3z", "M1 0h5v3h3v6H1z"];
  return (
    <section className="mt-[3px]">
      <Tabs tabs={["描边", "渐变"]} active="描边" />
      <div className="h-[229px] bg-[#404040] pt-px text-[9px] text-[#b5b5b5]">
        <Row label="粗细:">
          <StepField label="粗细" value="0 点" width="w-[55px]" />
          <Drop label="粗细预设" />
        </Row>
        <Row label="端点:">
          {cap.map((d, i) => (
            <IconButton key={d} label={["平头端点", "圆头端点", "投射末端"][i]} active={i === 0} className="mr-0.5">
              <Svg w={10} h={10}>
                <path d={d} fill="currentColor" stroke="none" />
              </Svg>
            </IconButton>
          ))}
        </Row>
        <Row label="斜接限制:">
          <StepField label="斜接限制" value="4" width="w-11" />
          <span className="ml-1 font-bold">x</span>
        </Row>
        <Row label="连接:">
          {join.map((d, i) => (
            <IconButton key={d} label={["斜接连接", "圆角连接", "斜面连接"][i]} active={i === 0} className="mr-0.5">
              <Svg w={10} h={10}>
                <path d={d} fill="currentColor" fillRule="evenodd" stroke="none" />
              </Svg>
            </IconButton>
          ))}
        </Row>
        <Row label="对齐描边:">
          {align.map((d, i) => (
            <IconButton key={d} label={["描边居中", "描边居内", "描边居外"][i]} className="mr-0.5 text-[#707070]">
              <Svg w={10} h={10}>
                <path d={d} fill="currentColor" stroke="none" />
              </Svg>
            </IconButton>
          ))}
        </Row>
        <div className="mb-0.5 h-1 border-b border-[#3b3b3b]" />
        <Row label="类型:">
          <button aria-label="描边类型" className="flex">
            <span className="flex h-[15px] w-[105px] items-center bg-[#dcdcdc] px-1">
              <span className="h-[7px] w-full bg-black" />
            </span>
            <span className="flex h-[15px] w-[13px] items-center justify-center border border-[#555] bg-[#333]">
              <Chevron />
            </span>
          </button>
        </Row>
        <Row label="起始处/结束处:">
          <Select label="起始处" options={["无"]} width="w-[45px]" tone="light" />
          <Svg w={10} h={9} className="mx-[9px]">
            <path d="M0 2.500h8M6 .5l2.500 2L6 4.500M10 6.500H2M4 4.500 1.500 6.500 4 8.500" />
          </Svg>
          <Select label="结束处" options={["无"]} width="w-[45px]" tone="light" />
        </Row>
        <Row label="缩放:">
          <StepField label="起始处缩放" value="100%" width="w-[45px]" />
          <IconButton label="链接箭头缩放" active className="mx-1.5">
            <ChainIcon />
          </IconButton>
          <StepField label="结束处缩放" value="100%" width="w-[45px]" />
        </Row>
        <Row label="对齐:">
          <IconButton label="箭头扩展到路径外">
            <Svg w={10} h={9}>
              <path d="M0 2.500h6M2 6.500h8" strokeWidth="1.300" />
              <path d="M7 4v5l3-2.500z" fill="currentColor" stroke="none" />
            </Svg>
          </IconButton>
          <IconButton label="箭头对齐到路径终点" active className="ml-0.5">
            <Svg w={10} h={9}>
              <path d="M0 2.500h10M2 6.500h8" strokeWidth="1.300" />
              <path d="M7 4v5l3-2.500z" fill="currentColor" stroke="none" />
            </Svg>
          </IconButton>
        </Row>
        <Row label="间隙颜色:">
          <button className="flex text-[#8a8a8a]" aria-label="间隙颜色 [无]">
            <span className="flex h-[15px] w-[105px] items-center gap-1 bg-[#dcdcdc] pl-[3px]">
              <span className="border border-[#222]">
                <NoneSwatch size={7} />
              </span>
              [无]
            </span>
            <span className="flex h-[15px] w-[13px] items-center justify-center bg-[#494949]">
              <Chevron />
            </span>
          </button>
        </Row>
        <Row label="间隙色调:">
          <span className="flex h-[15px] w-[45px] items-center bg-[#494949] pr-1">
            <input aria-label="间隙色调" defaultValue="100%" className="h-full w-full min-w-0 bg-transparent pl-[3px] outline-none" />
            <Chevron dir="right" />
          </span>
        </Row>
      </div>
    </section>
  );
}

function Panels() {
  return (
    <aside className="flex w-[206px] shrink-0 flex-col border-r border-[#2b2b2b] bg-[#2d2d2d]">
      <div className="flex h-[9px] items-center justify-end bg-[#323232] pr-1 text-[#999]">
        <Svg w={6} h={5}>
          <path d="M.5.5l2 2-2 2M3.500.5l2 2-2 2" strokeWidth=".8" />
        </Svg>
      </div>
      <SwatchPanel />
      <WrapPanel />
      <StrokePanel />
      <div className="mt-px flex flex-col gap-[3px]">
        <Tabs tabs={["文章", "超链接", "效果"]} active="文章" menu={false} arrow={false} />
        <Tabs tabs={["段落", "段落样式"]} active="段落" />
        <Tabs tabs={["字符", "字符样式"]} active="字符样式" />
        <Tabs tabs={["命名网格"]} active="命名网格" />
      </div>
    </aside>
  );
}

export default function App() {
  return (
    <div className="flex min-h-screen flex-col bg-white py-[21px] pr-[22px] pl-[21px] font-['Inter','Noto_Sans_CJK_SC',sans-serif] antialiased">
      <div className="flex flex-1 flex-col overflow-hidden rounded-[20px] border-t-[3px] border-[#2e2e2e] bg-[#404040] shadow-[0_3px_22px_rgba(0,0,0,0.4)]">
        <TitleBar />
        <ControlBar />
        <div className="flex flex-1">
          <Toolbar />
          <span className="w-0.5 shrink-0 bg-[#333]" />
          <DocumentArea />
          <span className="w-[3px] shrink-0 bg-[#2e2e2e]" />
          <Panels />
        </div>
      </div>
    </div>
  );
}
